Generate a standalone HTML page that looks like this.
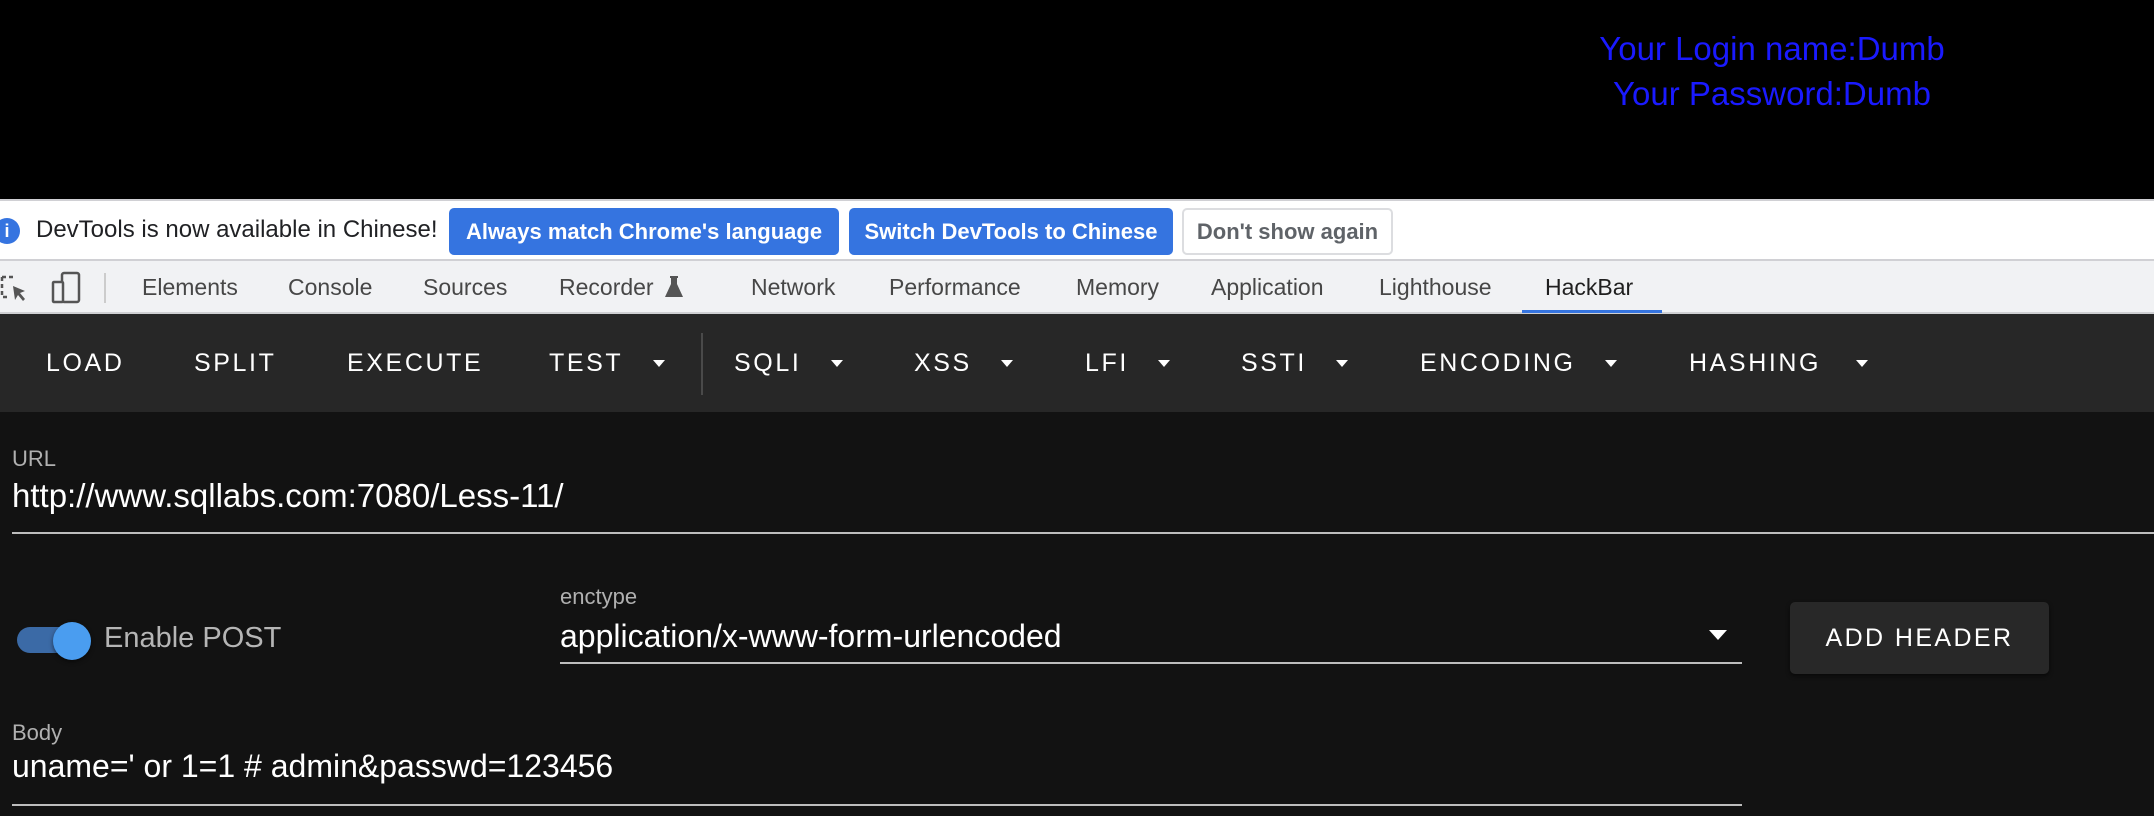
<!DOCTYPE html>
<html><head><meta charset="utf-8"><style>
*{margin:0;padding:0;box-sizing:border-box}
body{width:2154px;height:816px;overflow:hidden;background:#121212;font-family:"Liberation Sans",Arial,sans-serif;position:relative}
.a{position:absolute;white-space:nowrap}
#top{left:0;top:0;width:2154px;height:199px;background:#000}
.blue{color:#1a1aff;font-size:33px;width:420px;text-align:center;left:1562px}
#info{left:0;top:199px;width:2154px;height:62px;background:#fff;border-top:2px solid #d0d0d4;border-bottom:2px solid #d0d0d4}
.btn{top:7px;height:47px;border-radius:5px;font-size:22px;line-height:47px;text-align:center}
.bb{background:#3574e0;color:#fff;font-weight:bold}
#tabs{left:0;top:261px;width:2154px;height:53px;background:#f1f2f4;border-bottom:2px solid #cfd0d3}
.tab{top:0;line-height:53px;font-size:23px;color:#474747}
#hb{left:0;top:314px;width:2154px;height:98px;background:#272727}
.m{top:0;line-height:98px;font-size:25px;color:#fff;letter-spacing:2.6px}
.ar{top:46px;width:0;height:0;border-left:6px solid transparent;border-right:6px solid transparent;border-top:7px solid #fff}
.lbl{font-size:22px;color:#b0b0b0}
.val{font-size:32px;color:#fff}
.ul{height:2px;background:#bdbdbd}
</style></head><body>
<div id="top" class="a"></div>
<div class="a blue" style="top:30px">Your Login name:Dumb</div>
<div class="a blue" style="top:75px">Your Password:Dumb</div>

<div id="info" class="a">
 <div class="a" style="left:-6px;top:17px;width:26px;height:26px;border-radius:50%;background:#3574e0;color:#fff;font-size:18px;font-weight:bold;text-align:center;line-height:26px">i</div>
 <div class="a" style="left:36px;top:15px;font-size:24px;color:#202124">DevTools is now available in Chinese!</div>
 <div class="a btn bb" style="left:449px;width:390px">Always match Chrome's language</div>
 <div class="a btn bb" style="left:849px;width:324px">Switch DevTools to Chinese</div>
 <div class="a btn" style="left:1182px;width:211px;border:2px solid #dcdde0;color:#5f6368;font-weight:bold;line-height:43px">Don't show again</div>
</div>

<div id="tabs" class="a">
 <svg class="a" style="left:0;top:13px" width="30" height="30" viewBox="0 0 30 30"><path d="M2 3h14M2 3v20h6" fill="none" stroke="#555" stroke-width="2.5" stroke-dasharray="4 3"/><path d="M13 12l12 5-5 2 5 6-2 2-5-6-3 5z" fill="#555"/></svg>
 <svg class="a" style="left:50px;top:10px" width="32" height="34" viewBox="0 0 32 34"><rect x="12" y="2" width="17" height="29" rx="2" fill="none" stroke="#555" stroke-width="2.5"/><rect x="3" y="11" width="10" height="20" rx="1" fill="#f1f2f4" stroke="#555" stroke-width="2.5"/></svg>
 <div class="a" style="left:104px;top:12px;width:2px;height:30px;background:#ccc"></div>
 <div class="a tab" style="left:142px">Elements</div>
 <div class="a tab" style="left:288px">Console</div>
 <div class="a tab" style="left:423px">Sources</div>
 <div class="a tab" style="left:559px">Recorder</div>
 <svg class="a" style="left:665px;top:14px" width="18" height="24" viewBox="0 0 18 24"><path d="M5 1h8v2h-1v6l6 13H0L6 9V3H5z" fill="#555"/></svg>
 <div class="a tab" style="left:751px">Network</div>
 <div class="a tab" style="left:889px">Performance</div>
 <div class="a tab" style="left:1076px">Memory</div>
 <div class="a tab" style="left:1211px">Application</div>
 <div class="a tab" style="left:1379px">Lighthouse</div>
 <div class="a tab" style="left:1545px;color:#1f1f1f">HackBar</div>
 <div class="a" style="left:1522px;top:49px;width:140px;height:3px;background:#3574e0"></div>
</div>

<div id="hb" class="a">
 <div class="a m" style="left:46px">LOAD</div>
 <div class="a m" style="left:194px">SPLIT</div>
 <div class="a m" style="left:347px">EXECUTE</div>
 <div class="a m" style="left:549px">TEST</div><div class="a ar" style="left:653px"></div>
 <div class="a" style="left:701px;top:19px;width:2px;height:62px;background:#4a4a4a"></div>
 <div class="a m" style="left:734px">SQLI</div><div class="a ar" style="left:831px"></div>
 <div class="a m" style="left:914px">XSS</div><div class="a ar" style="left:1001px"></div>
 <div class="a m" style="left:1085px">LFI</div><div class="a ar" style="left:1158px"></div>
 <div class="a m" style="left:1241px">SSTI</div><div class="a ar" style="left:1336px"></div>
 <div class="a m" style="left:1420px">ENCODING</div><div class="a ar" style="left:1605px"></div>
 <div class="a m" style="left:1689px">HASHING</div><div class="a ar" style="left:1856px"></div>
</div>

<div class="a lbl" style="left:12px;top:446px">URL</div>
<div class="a val" style="left:12px;top:477px;font-size:33px">http://www.sqllabs.com:7080/Less-11/</div>
<div class="a ul" style="left:12px;top:532px;width:2142px"></div>

<div class="a" style="left:17px;top:627px;width:62px;height:26px;border-radius:13px;background:#3b6aa6"></div>
<div class="a" style="left:53px;top:622px;width:38px;height:38px;border-radius:50%;background:#4a9df0;box-shadow:0 2px 4px rgba(0,0,0,.5)"></div>
<div class="a" style="left:104px;top:622px;font-size:29px;color:#b5b5b5">Enable POST</div>

<div class="a lbl" style="left:560px;top:584px">enctype</div>
<div class="a val" style="left:560px;top:618px">application/x-www-form-urlencoded</div>
<div class="a" style="left:1709px;top:630px;width:0;height:0;border-left:9px solid transparent;border-right:9px solid transparent;border-top:10px solid #fff"></div>
<div class="a ul" style="left:560px;top:662px;width:1182px"></div>

<div class="a" style="left:1790px;top:602px;width:259px;height:72px;border-radius:5px;background:#282828;box-shadow:0 2px 4px rgba(0,0,0,.6);color:#fff;font-size:25px;line-height:72px;text-align:center;letter-spacing:2.4px">ADD HEADER</div>

<div class="a lbl" style="left:12px;top:720px">Body</div>
<div class="a val" style="left:12px;top:748px">uname=' or 1=1 # admin&amp;passwd=123456</div>
<div class="a ul" style="left:12px;top:804px;width:1730px"></div>
</body></html>
